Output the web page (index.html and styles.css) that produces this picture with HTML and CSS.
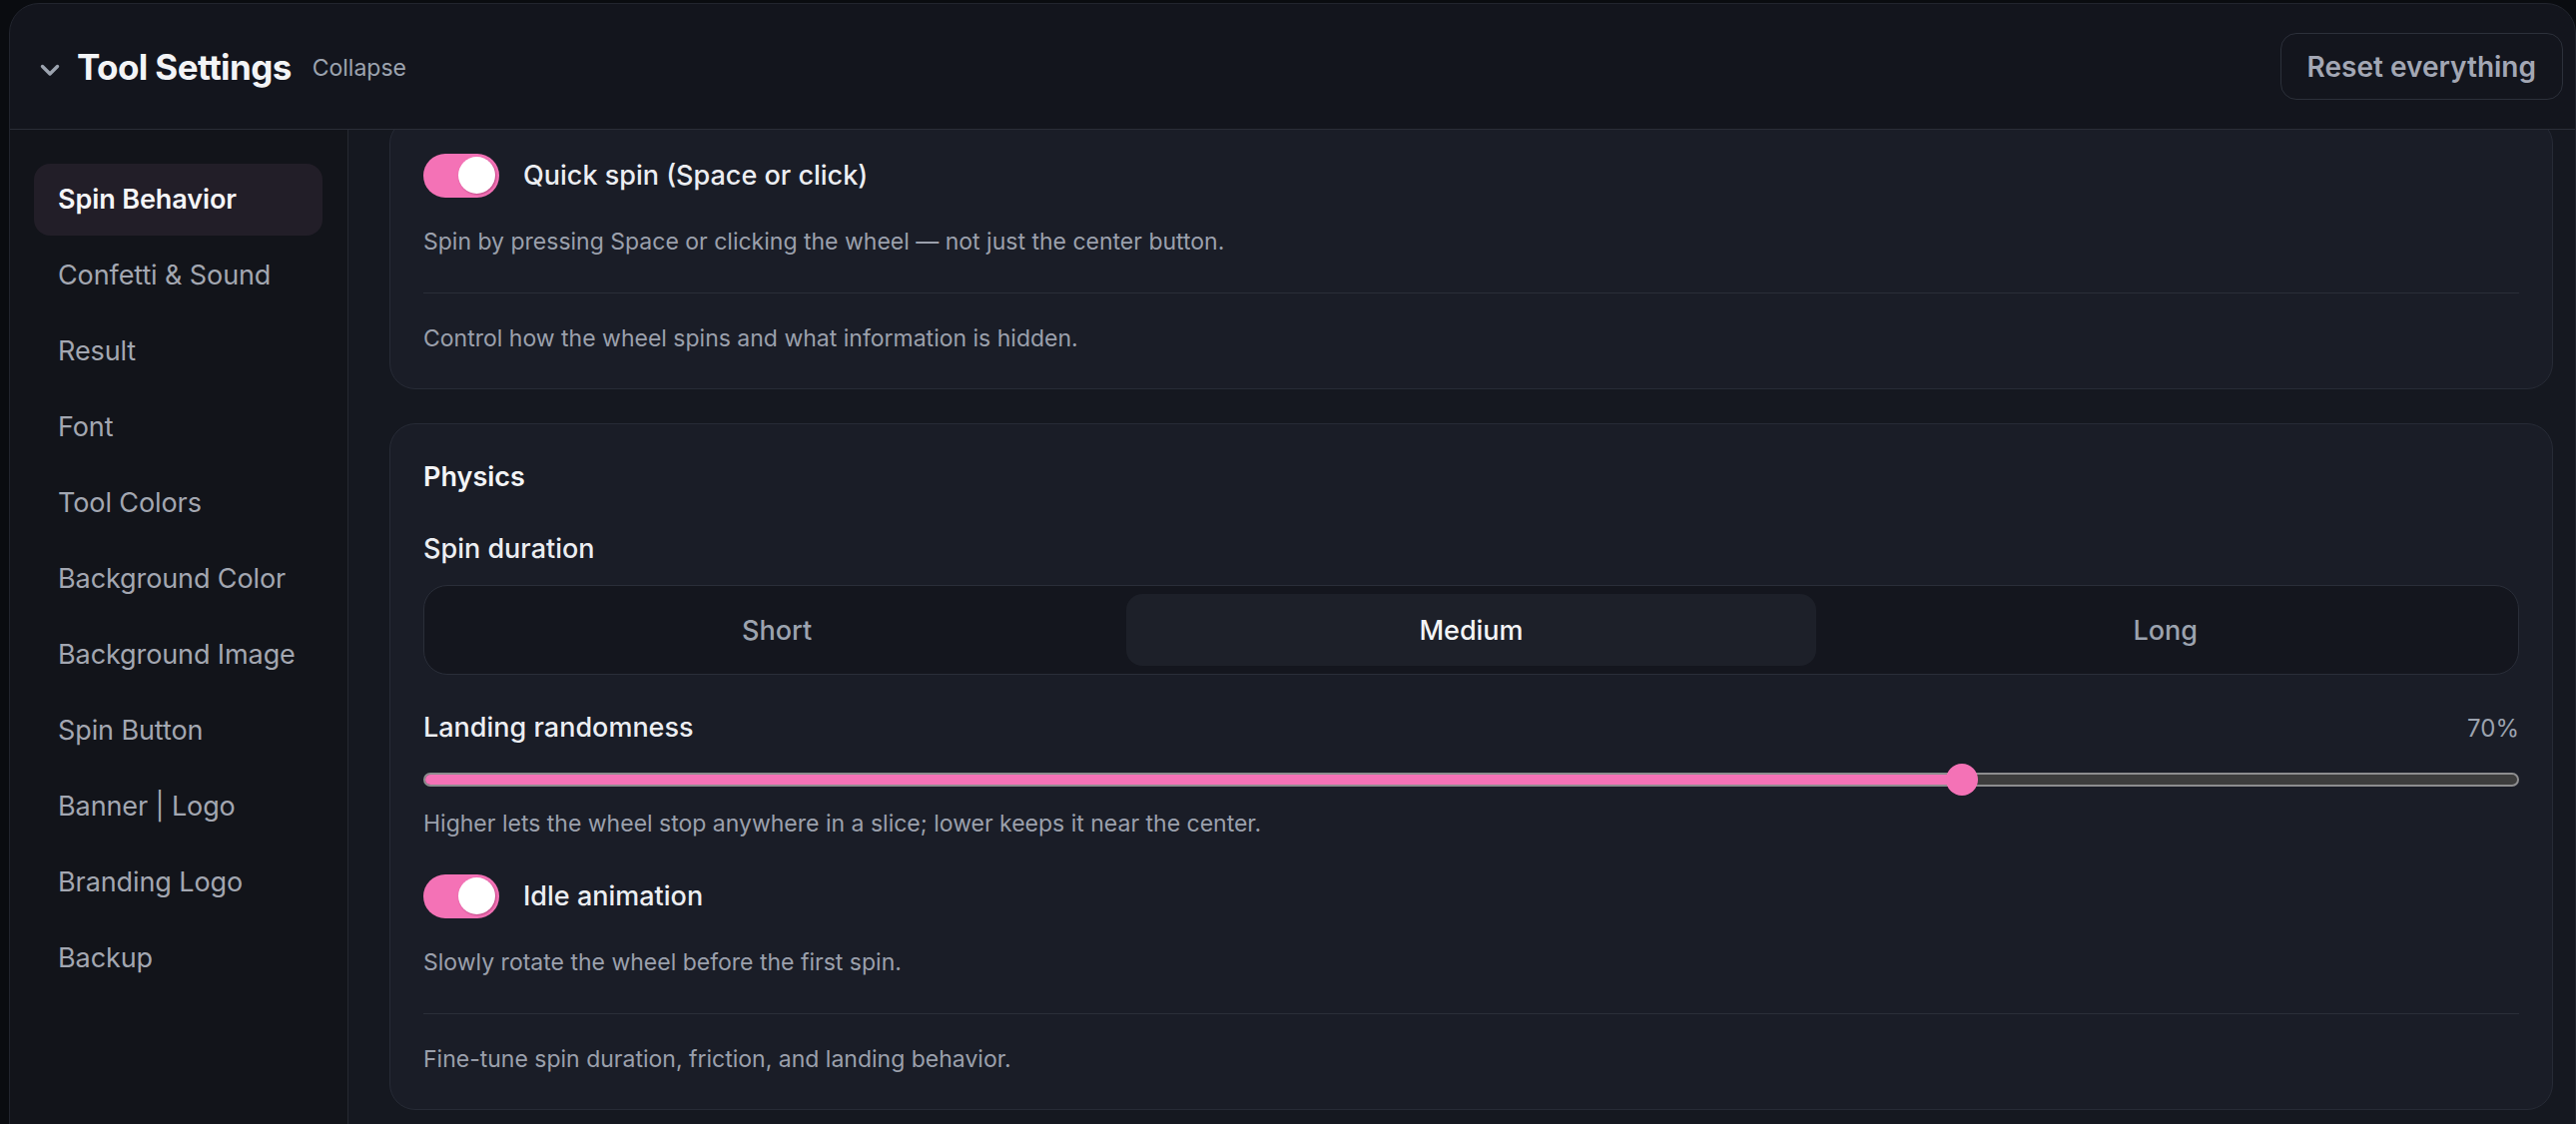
FILE: index.html
```html
<!DOCTYPE html>
<html lang="en">
<head>
  <meta charset="UTF-8">
  <meta name="viewport" content="width=device-width, initial-scale=1.0">
  <title>Tool Settings</title>
  <link rel="stylesheet" href="styles.css">
</head>
<body>
  <div class="panel">
    <!-- Header -->
    <header class="panel-header">
      <div class="header-left">
        <svg class="chevron" width="20" height="14" viewBox="0 0 20 14" aria-hidden="true">
          <path d="M2.5 3.5 L10 11 L17.5 3.5" fill="none" stroke="#9ca3af" stroke-width="3.4" stroke-linecap="round" stroke-linejoin="round"/>
        </svg>
        <h1>Tool Settings</h1>
        <span class="collapse">Collapse</span>
      </div>
      <button class="reset">Reset everything</button>
    </header>

    <div class="panel-body">
      <!-- Sidebar -->
      <nav class="sidebar">
        <a class="nav-item active">Spin Behavior</a>
        <a class="nav-item">Confetti &amp; Sound</a>
        <a class="nav-item">Result</a>
        <a class="nav-item">Font</a>
        <a class="nav-item">Tool Colors</a>
        <a class="nav-item">Background Color</a>
        <a class="nav-item">Background Image</a>
        <a class="nav-item">Spin Button</a>
        <a class="nav-item">Banner | Logo</a>
        <a class="nav-item">Branding Logo</a>
        <a class="nav-item">Backup</a>
      </nav>

      <!-- Content -->
      <main class="content">
        <section class="card card-scrolled">
          <label class="toggle-row">
            <span class="toggle on"><span class="knob"></span></span>
            <span class="label">Quick spin (Space or click)</span>
          </label>
          <p class="desc">Spin by pressing Space or clicking the wheel — not just the center button.</p>
          <hr class="divider">
          <p class="desc footer-desc">Control how the wheel spins and what information is hidden.</p>
        </section>

        <section class="card">
          <h2>Physics</h2>

          <div class="label spin-label">Spin duration</div>
          <div class="segmented">
            <button class="segment">Short</button>
            <button class="segment active">Medium</button>
            <button class="segment">Long</button>
          </div>

          <div class="range-head">
            <span class="label">Landing randomness</span>
            <span class="range-value">70%</span>
          </div>
          <div class="range">
            <div class="range-track">
              <div class="range-fill" style="width: 73.4%"></div>
            </div>
            <div class="range-thumb" style="left: 73.4%"></div>
          </div>
          <p class="desc range-desc">Higher lets the wheel stop anywhere in a slice; lower keeps it near the center.</p>

          <label class="toggle-row idle-row">
            <span class="toggle on"><span class="knob"></span></span>
            <span class="label">Idle animation</span>
          </label>
          <p class="desc">Slowly rotate the wheel before the first spin.</p>
          <hr class="divider">
          <p class="desc footer-desc">Fine-tune spin duration, friction, and landing behavior.</p>
        </section>
      </main>
    </div>
  </div>
</body>
</html>
```

FILE: styles.css
```css
/* Global */
* {
  box-sizing: border-box;
}

body {
  margin: 0;
  height: 1126px;
  overflow: hidden;
  background-color: #0a0c10;
  font-family: 'Inter', 'Noto Sans', sans-serif;
  color: #eceef2;
}

.panel {
  margin: 3px 0 0 9px;
  width: 2571px;
  height: 1200px;
  background-color: #13151d;
  border: 1px solid #22252e;
  border-radius: 30px;
  overflow: hidden;
  display: flex;
  flex-direction: column;
}

/* Header */
.panel-header {
  height: 126px;
  flex-shrink: 0;
  display: flex;
  align-items: center;
  justify-content: space-between;
  padding: 0 12px 0 30px;
  border-bottom: 1px solid #2a2d37;
}

.header-left {
  display: flex;
  align-items: center;
}

.chevron {
  margin-top: 7px;
  margin-right: 17px;
}

.panel-header h1 {
  margin: 0;
  font-size: 35px;
  font-weight: 700;
  letter-spacing: -0.6px;
  color: #f3f4f6;
}

.collapse {
  margin-left: 21px;
  margin-top: 2px;
  font-size: 23px;
  color: #9ca3af;
}

.reset {
  height: 67px;
  padding: 0 26px;
  background: transparent;
  border: 1px solid #2c303a;
  border-radius: 16px;
  font-family: inherit;
  font-size: 28px;
  font-weight: 600;
  color: #a3a7b4;
}

/* Body */
.panel-body {
  flex: 1;
  display: flex;
  min-height: 0;
}

.sidebar {
  width: 339px;
  flex-shrink: 0;
  background-color: #12141a;
  border-right: 1px solid #262932;
  padding: 34px 25px 0 24px;
  display: flex;
  flex-direction: column;
  gap: 4px;
}

.nav-item {
  display: block;
  height: 72px;
  line-height: 72px;
  padding: 0 24px;
  border-radius: 16px;
  font-size: 27px;
  letter-spacing: -0.1px;
  white-space: nowrap;
  color: #a3a7b1;
}

.nav-item.active {
  background-color: #221e28;
  color: #f5f5f7;
  font-weight: 600;
}

.content {
  flex: 1;
  overflow: hidden;
  padding: 0 22px 0 41px;
  background-color: #151820;
}

/* Cards */
.card {
  background-color: #1a1d27;
  border: 1px solid #272b36;
  border-radius: 26px;
  padding: 35px 33px 34px;
  margin-bottom: 34px;
}

.card-scrolled {
  margin-top: -12px;
}

.card h2 {
  margin: 0;
  font-size: 27px;
  line-height: 35px;
  font-weight: 600;
  color: #f3f4f6;
}

.label {
  font-size: 27px;
  line-height: 36px;
  font-weight: 500;
  color: #eceef2;
}

.desc {
  margin: 28px 0 0;
  font-size: 23px;
  line-height: 32px;
  color: #9ba0ac;
}

.divider {
  margin: 35px 0 0;
  border: none;
  border-top: 1px solid #2a2e38;
}

.footer-desc {
  margin-top: 29px;
}

/* Toggle */
.toggle-row {
  display: flex;
  align-items: center;
  gap: 24px;
}

.idle-row {
  margin-top: 35px;
}

.toggle {
  position: relative;
  width: 76px;
  height: 44px;
  border-radius: 22px;
  background-color: #f472b6;
  flex-shrink: 0;
}

.toggle .knob {
  position: absolute;
  top: 3px;
  right: 4px;
  width: 37px;
  height: 37px;
  border-radius: 50%;
  background-color: #fff;
  box-shadow: 1px 1px 2px rgba(120, 20, 70, 0.45);
}

/* Segmented */
.spin-label {
  margin-top: 37px;
}

.segmented {
  margin-top: 18px;
  display: grid;
  grid-template-columns: 1fr 1fr 1fr;
  gap: 5px;
  padding: 8px;
  background-color: #14161e;
  border: 1px solid #2a2e39;
  border-radius: 24px;
}

.segment {
  height: 72px;
  background: transparent;
  border: none;
  border-radius: 16px;
  font-family: inherit;
  font-size: 27px;
  font-weight: 500;
  color: #9ca3af;
}

.segment.active {
  background-color: #1d2029;
  color: #f3f4f6;
}

/* Range */
.range-head {
  margin-top: 35px;
  display: flex;
  justify-content: space-between;
  align-items: center;
}

.range-value {
  font-size: 24px;
  color: #9ca3af;
}

.range {
  position: relative;
  margin-top: 18px;
  height: 32px;
  display: flex;
  align-items: center;
}

.range-track {
  width: 100%;
  height: 14px;
  border-radius: 7px;
  border: 2px solid #8d8d8f;
  background-color: #3d3d3d;
  overflow: hidden;
}

.range-fill {
  height: 100%;
  background-color: #f472b6;
}

.range-thumb {
  position: absolute;
  top: 0;
  width: 32px;
  height: 32px;
  margin-left: -16px;
  border-radius: 50%;
  background-color: #f472b6;
}

.range-desc {
  margin-top: 12px;
}
```
